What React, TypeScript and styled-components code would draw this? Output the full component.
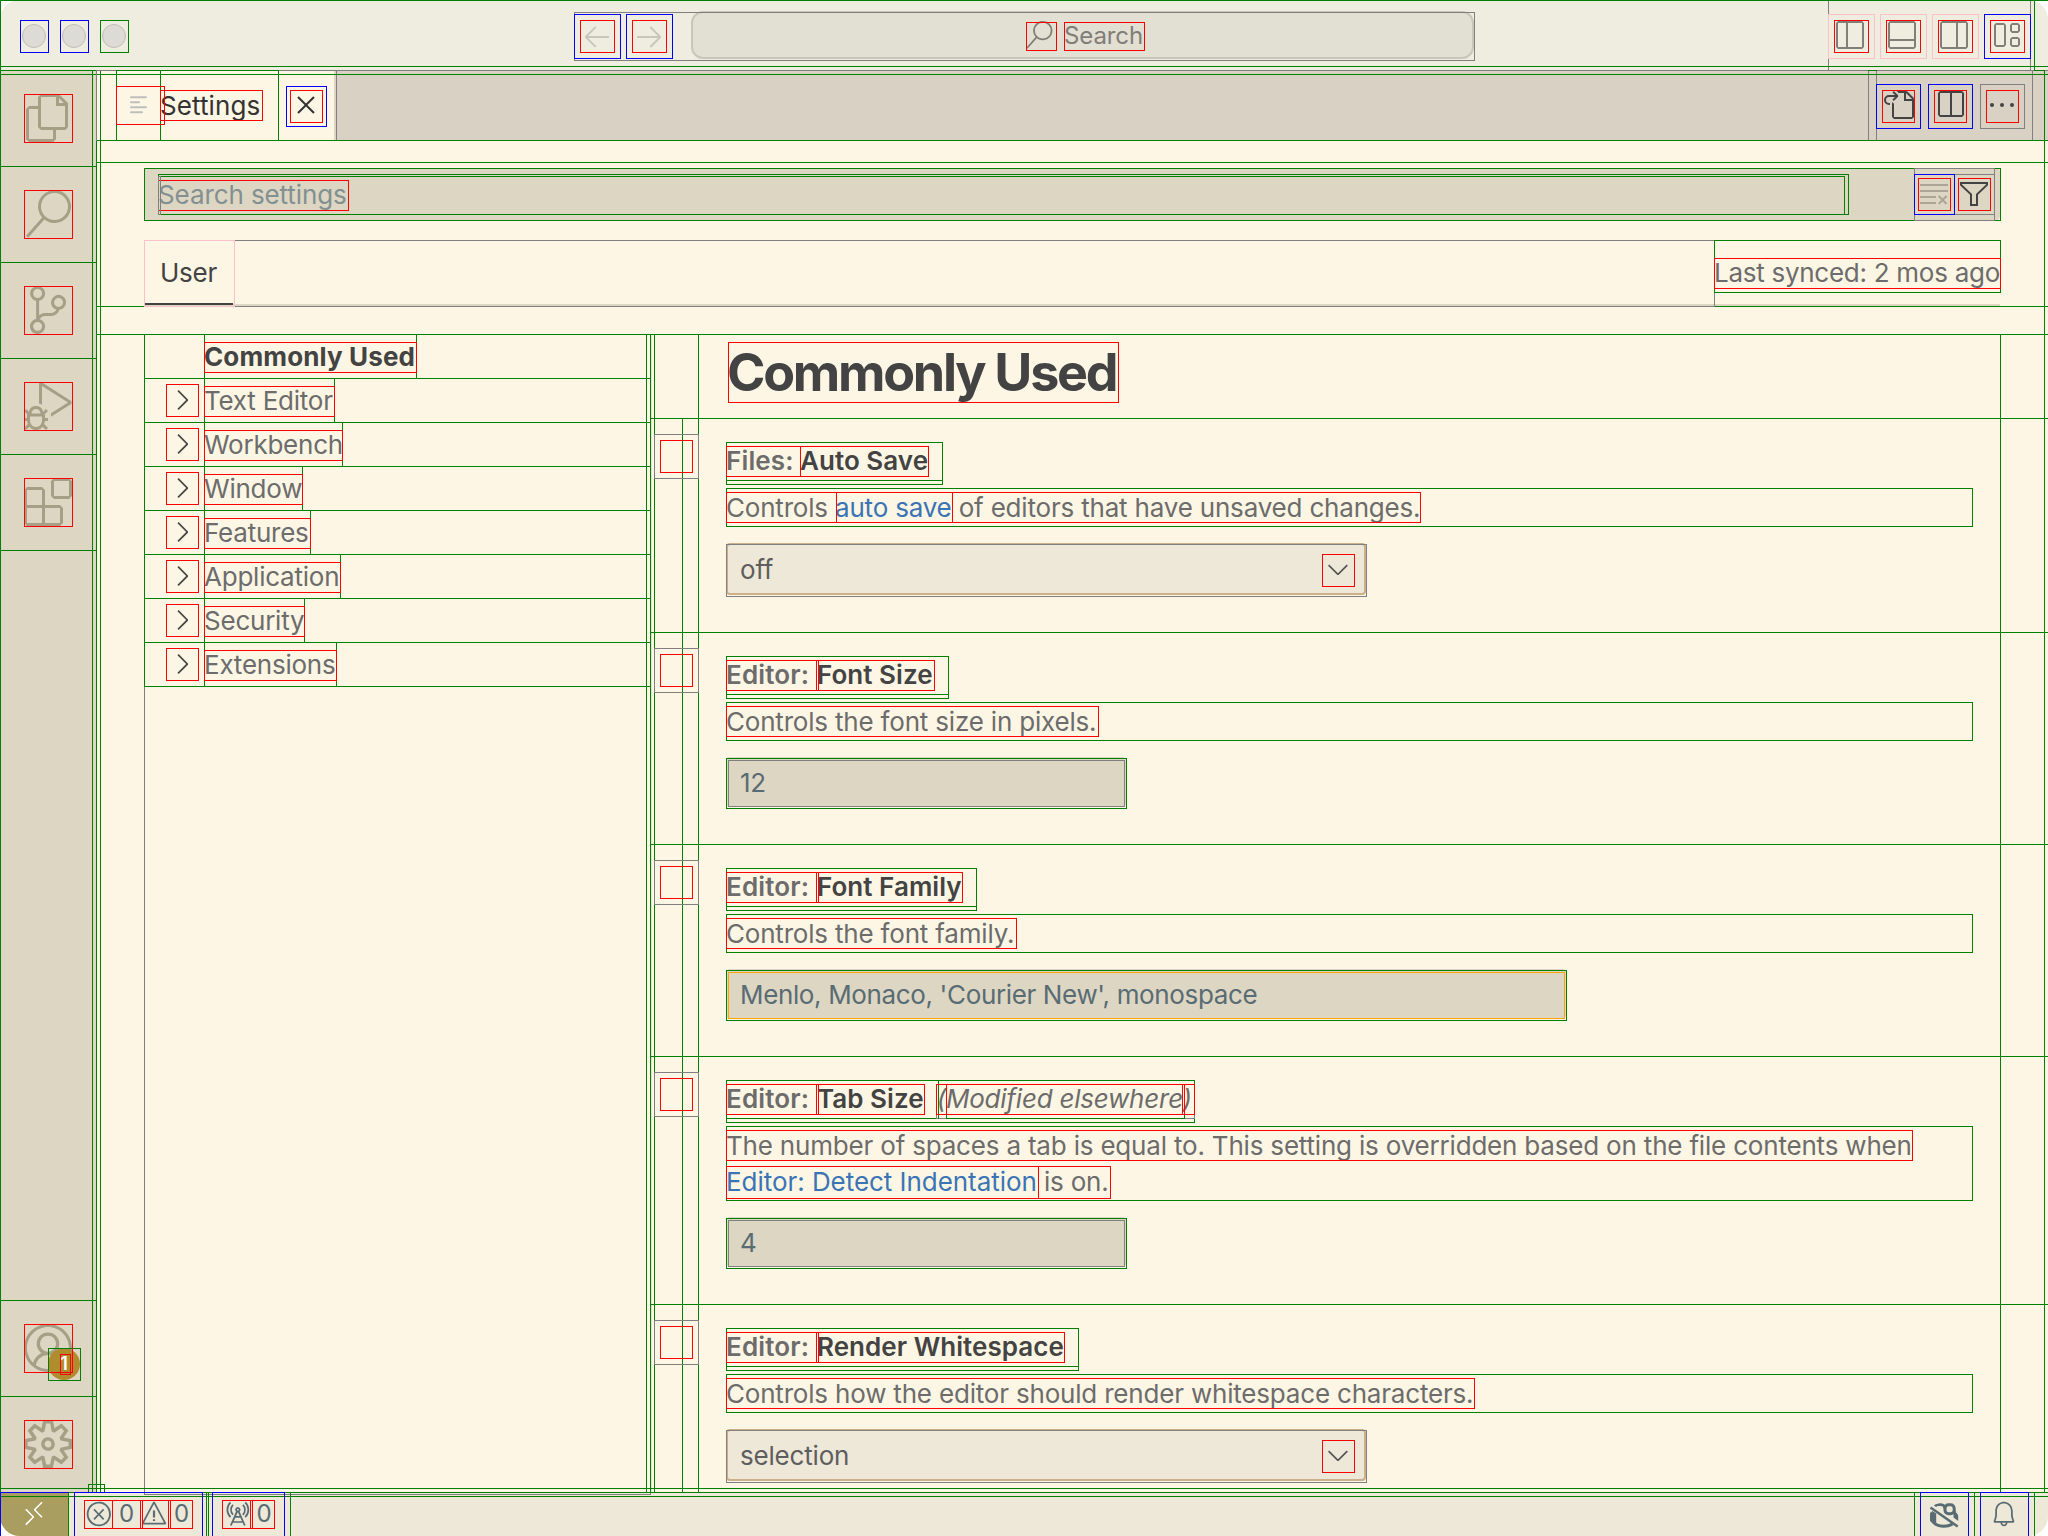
import React from 'react';
import styled, { createGlobalStyle } from 'styled-components';
import {
  VscFiles, VscSearch, VscSourceControl, VscDebugAlt, VscExtensions, VscAccount, VscSettingsGear,
  VscLayoutSidebarLeftOff, VscLayoutPanelOff, VscLayoutSidebarRightOff, VscLayout,
  VscGoToFile, VscSplitHorizontal, VscEllipsis, VscClearAll, VscFilter,
  VscChevronRight, VscChevronDown, VscClose, VscError, VscWarning, VscRadioTower,
  VscBell, VscRemote, VscArrowLeft, VscArrowRight,
} from 'react-icons/vsc';

const c = {
  bg: '#fdf6e4',
  side: '#ddd6c3',
  tabs: '#d9d1c4',
  title: '#efece0',
  status: '#eee8d8',
  text: '#6c6c6c',
  strong: '#434343',
  link: '#3b74b5',
  slate: '#596c73',
  activity: '#a69f86',
};

const Global = createGlobalStyle`
  * { box-sizing: border-box; }
  body { margin: 0; background: #fff; }
  svg { display: block; flex: none; }
`;

const Window = styled.div`
  position: relative;
  display: flex;
  flex-direction: column;
  width: 2048px;
  height: 1536px;
  overflow: hidden;
  border-radius: 20px;
  background: ${c.bg};
  color: ${c.text};
  font: 400 26px/30px Inter, "Liberation Sans", sans-serif;
  letter-spacing: -0.19px;
  white-space: pre;
`;

/* Title bar */
const TitleBar = styled.header`
  display: flex;
  flex: none;
  height: 70px;
  padding: 0 26px 0 22px;
  background: ${c.title};
`;
const Lights = styled.div`
  display: flex;
  gap: 16px;
  width: 559px;
  padding-top: 24px;
`;
const Light = styled.span`
  width: 24px;
  height: 24px;
  border: 1px solid #bfbdb6;
  border-radius: 50%;
  background: #dddbd6;
`;
const History = styled.div`
  display: flex;
  gap: 20px;
  width: 110px;
  padding-top: 20px;
  color: #c9c6bb;
  font-size: 32px;
`;
const CommandCenter = styled.div`
  display: flex;
  align-items: center;
  justify-content: center;
  gap: 11px;
  width: 783px;
  height: 48px;
  margin-top: 11px;
  padding-left: 3px;
  border: 2px solid #c9c6ba;
  border-radius: 12px;
  background: #e2dfd3;
  color: #807e77;
  font-size: 24px;
  letter-spacing: -0.1px;
`;
const LayoutActions = styled.div`
  display: flex;
  gap: 20px;
  margin-left: auto;
  padding-top: 19px;
  color: #827f78;
  font-size: 32px;
`;

/* Activity bar */
const Body = styled.div`
  display: flex;
  flex: 1;
  min-height: 0;
`;
const ActivityBar = styled.nav`
  display: flex;
  flex-direction: column;
  flex: none;
  width: 96px;
  background: ${c.side};
  color: ${c.activity};
  font-size: 48px;
`;
const ActivityItem = styled.div`
  position: relative;
  display: flex;
  align-items: center;
  justify-content: center;
  height: 96px;
`;
const Spacer = styled.div`
  flex: 1;
`;
const Badge = styled.span`
  position: absolute;
  left: 48px;
  top: 48px;
  width: 32px;
  height: 32px;
  border-radius: 50%;
  background: #b08c2e;
  color: #fff;
  font-size: 18px;
  font-weight: 600;
  line-height: 32px;
  text-align: center;
`;

/* Editor */
const Editor = styled.main`
  display: flex;
  flex-direction: column;
  flex: 1;
  min-width: 0;
`;
const TabBar = styled.div`
  display: flex;
  flex: none;
  height: 70px;
  background: ${c.tabs};
`;
const Tab = styled.div`
  display: flex;
  align-items: center;
  width: 240px;
  padding-left: 34px;
  border-right: 2px solid ${c.side};
  background: ${c.bg};
  color: #333;
  letter-spacing: 0.1px;
`;
const TabLabel = styled.span`
  width: 143px;
  padding: 1px 0 0 13px;
`;
const EditorActions = styled.div`
  display: flex;
  align-items: center;
  gap: 20px;
  margin-left: auto;
  padding-right: 30px;
  color: ${c.strong};
  font-size: 32px;
`;
const Header = styled.div`
  display: flex;
  flex-direction: column;
  flex: none;
  gap: 20px;
  height: 194px;
  padding: 28px 48px 0;
`;
const SearchBox = styled.div`
  display: flex;
  align-items: center;
  gap: 8px;
  height: 52px;
  padding: 0 10px 0 14px;
  border-radius: 4px;
  background: ${c.side};
  color: #829092;
  letter-spacing: -0.1px;
`;
const Grow = styled.span`
  flex: 1;
  padding-top: 2px;
`;
const Glyph = styled.span<{ $color: string }>`
  color: ${p => p.$color};
  font-size: 32px;
`;
const ScopeRow = styled.div`
  display: flex;
  justify-content: space-between;
  height: 66px;
  padding-left: 1px;
  border-bottom: 2px solid ${c.side};
  line-height: 66px;
  letter-spacing: -0.27px;
`;
const Scope = styled.span`
  width: 88px;
  height: 65px;
  padding-left: 15px;
  border-bottom: 2px solid ${c.strong};
  color: ${c.strong};
`;
const Split = styled.div`
  display: flex;
  flex: 1;
  min-height: 0;
  padding-left: 48px;
`;
const Toc = styled.div`
  width: 508px;
  border-right: 2px solid #e8e1cf;
`;
const TocRow = styled.div<{ $selected?: boolean }>`
  display: flex;
  align-items: center;
  gap: 6px;
  height: 44px;
  padding-left: ${p => (p.$selected ? 60 : 22)}px;
  color: ${p => (p.$selected ? c.strong : c.text)};
  font-weight: ${p => (p.$selected ? 700 : 400)};
  letter-spacing: ${p => (p.$selected ? 0.13 : -0.23)}px;
`;
const TocLabel = styled.span`
  padding-top: 1px;
  line-height: 31px;
`;
const List = styled.div`
  flex: 1;
  min-width: 0;
  overflow: hidden;
  padding-left: 74px;
`;
const Heading = styled.h2`
  height: 84px;
  margin: 0;
  padding: 9px 0 0 1px;
  color: ${c.strong};
  font-size: 52px;
  font-weight: 700;
  line-height: 60px;
  letter-spacing: -2.27px;
`;
const Setting = styled.section<{ $h: number }>`
  height: ${p => p.$h}px;
  padding-top: 28px;
`;
const Title = styled.div`
  display: flex;
  height: 42px;
  font-weight: 600;
`;
const Category = styled.span<{ $w: number }>`
  width: ${p => p.$w}px;
  letter-spacing: 0.15px;
`;
const Name = styled.span`
  color: ${c.strong};
  letter-spacing: 0.04px;
`;
const Modified = styled.span`
  padding-left: 13px;
  font-style: italic;
  font-weight: 400;
  letter-spacing: -0.22px;
`;
const Description = styled.div`
  padding-top: 2px;
  line-height: 36px;
`;
const Link = styled.a<{ $ls?: number }>`
  color: ${c.link};
  letter-spacing: ${p => p.$ls ?? -0.2}px;
`;
const Select = styled.div`
  display: flex;
  align-items: center;
  justify-content: space-between;
  width: 640px;
  height: 52px;
  margin-top: 17px;
  padding: 0 10px 0 12px;
  border: 2px solid #ccb08c;
  border-radius: 4px;
  background: ${c.status};
  color: #5e5e5e;
`;
const SelectValue = styled.span`
  padding-top: 2px;
`;
const Input = styled.div<{ $w: number }>`
  width: ${p => p.$w}px;
  height: 50px;
  margin-top: 17px;
  padding: 1px 0 0 14px;
  border-radius: 4px;
  background: ${c.side};
  color: ${c.slate};
  line-height: 50px;
  letter-spacing: -0.36px;
`;

/* Status bar */
const StatusBar = styled.footer`
  display: flex;
  flex: none;
  height: 44px;
  background: ${c.status};
  color: ${c.slate};
  font-size: 24px;
`;
const Remote = styled.div`
  display: flex;
  align-items: center;
  justify-content: center;
  width: 68px;
  background: #a99e5f;
  color: #fff;
  font-size: 28px;
`;
const StatusItem = styled.div<{ $ml: number; $w: number }>`
  display: flex;
  align-items: center;
  justify-content: center;
  gap: 6px;
  width: ${p => p.$w}px;
  margin-left: ${p => p.$ml}px;
`;
const StatusGlyph = styled.span`
  font-size: 28px;
`;

/* Element outlines drawn above the window */
type Tone = 'green' | 'gray' | 'blue' | 'pink' | 'orange' | 'red';
type Rect = [Tone, number, number, number, number];
const Outlines = styled.div`
  position: absolute;
  inset: 0;
  width: 2048px;
  height: 1536px;
  overflow: hidden;
  pointer-events: none;
`;
const Outline = styled.i<{ $tone: Tone }>`
  position: absolute;
  border: 1px solid ${p => p.$tone};
`;

const G = 'green' as const, Y = 'gray' as const, B = 'blue' as const, P = 'pink' as const, O = 'orange' as const, R = 'red' as const;
const toc: [string, number][] = [
  ['Commonly Used', 416], ['Text Editor', 334], ['Workbench', 342], ['Window', 302],
  ['Features', 310], ['Application', 340], ['Security', 304], ['Extensions', 336],
];

const frame: Rect[] = [
  [Y, 1828, 0, 2030, 70], [Y, 574, 12, 1474, 60],
  [Y, 96, 70, 336, 140], [Y, 1868, 70, 2048, 140], [Y, 1876, 70, 2032, 140],
  [Y, 144, 334, 650, 1494],
  [G, 0, 0, 2050, 1540], [G, 2034, 0, 2034, 70], [G, 0, 66, 2050, 74],
  [G, 0, 70, 96, 166], [G, 92, 70, 100, 1492], [G, 0, 166, 96, 262], [G, 0, 262, 96, 358],
  [G, 0, 358, 96, 454], [G, 0, 454, 96, 550], [G, 96, 140, 96, 1492],
  [G, 0, 1300, 96, 1396], [G, 0, 1488, 2050, 1496], [G, 88, 1484, 104, 1492], [G, 0, 1492, 2050, 1492],
  [Y, 96, 70, 2034, 70],
  [G, 116, 70, 160, 140], [G, 160, 70, 278, 140], [G, 96, 140, 2050, 140], [Y, 96, 70, 96, 140],
  [G, 2034, 70, 2044, 70], [G, 1868, 70, 1876, 70], [G, 2044, 70, 2044, 1492],
  [G, 96, 162, 2050, 162], [G, 96, 306, 2050, 306], [G, 96, 334, 2050, 334],
  [G, 144, 168, 2000, 220], [G, 158, 174, 1848, 214], [G, 158, 176, 1844, 214], [Y, 158, 176, 160, 214],
  [Y, 1914, 168, 1994, 220], [Y, 1954, 174, 1994, 214], [B, 1914, 174, 1954, 214],
  [Y, 234, 240, 1714, 306], [P, 144, 240, 234, 306], [G, 1714, 240, 2000, 292],
  [G, 646, 334, 654, 1492], [G, 650, 334, 650, 1492], [G, 698, 334, 698, 1492], [G, 682, 418, 682, 1492],
  [G, 2000, 334, 2000, 1492],
  [B, 20, 20, 48, 52], [B, 60, 20, 88, 52], [G, 100, 20, 128, 52],
  [B, 574, 14, 620, 58], [B, 626, 14, 672, 58],
  [P, 1828, 14, 1874, 58], [P, 1880, 14, 1926, 58], [P, 1932, 14, 1978, 58], [B, 1984, 14, 2030, 58],
  [B, 286, 86, 326, 126], [B, 1876, 84, 1920, 128], [B, 1928, 84, 1972, 128], [Y, 1980, 84, 2024, 128],
  [G, 68, 1492, 206, 1540], [G, 208, 1492, 290, 1540], [G, 1914, 1492, 1974, 1540], [G, 1974, 1492, 2034, 1540],
  [B, 0, 1492, 68, 1492], [B, 0, 1492, 0, 1540], [B, 74, 1492, 202, 1540], [B, 212, 1492, 284, 1540],
  [B, 1920, 1492, 1968, 1540], [B, 1980, 1492, 2028, 1540],
  [G, 48, 1348, 80, 1380],
];
const glyphs: Rect[] = [
  [R, 580, 20, 614, 52], [R, 632, 20, 666, 52], [R, 1026, 22, 1056, 50], [R, 1064, 22, 1144, 50],
  [R, 1834, 20, 1868, 52], [R, 1886, 20, 1920, 52], [R, 1938, 20, 1972, 52], [R, 1990, 20, 2024, 52],
  [R, 24, 94, 72, 142], [R, 24, 190, 72, 238], [R, 24, 286, 72, 334], [R, 24, 382, 72, 430], [R, 24, 478, 72, 526],
  [R, 24, 1324, 72, 1372], [R, 24, 1420, 72, 1468], [R, 60, 1354, 70, 1374],
  [R, 116, 86, 164, 124], [R, 160, 90, 262, 120], [R, 290, 90, 322, 122],
  [R, 1882, 90, 1914, 122], [R, 1934, 90, 1966, 122], [R, 1986, 90, 2018, 122],
  [R, 158, 180, 348, 210], [Y, 158, 176, 160, 214], [R, 1918, 178, 1950, 210], [R, 1958, 178, 1990, 210],
  [R, 1714, 258, 2000, 288], [R, 728, 342, 1118, 402],
  [R, 84, 1500, 112, 1528], [R, 112, 1500, 142, 1528], [R, 140, 1500, 170, 1528], [R, 168, 1500, 192, 1528],
  [R, 222, 1500, 252, 1528], [R, 250, 1500, 274, 1528],
];
const tocRects: Rect[] = toc.flatMap(([, right], i): Rect[] => {
  const y = 334 + i * 44;
  const rows: Rect[] = [[G, 144, y, 650, y + 44], [G, 204, y, right, y + 44], [R, 204, y + 8, right, y + 38]];
  return i ? [...rows, [R, 166, y + 6, 198, y + 38]] : rows;
});
const select = (y: number): Rect[] => [[Y, 726, y, 1366, y + 52], [R, 1322, y + 10, 1354, y + 42]];
const input = (y: number, right: number, tone: Tone): Rect[] => [[G, 726, y, right, y + 50], [tone, 728, y + 2, right - 2, y + 48]];
const row = (y: number, titleRight: number, nameRight: number, cat: [number, number], descH: number): Rect[] => [
  [G, 650, y, 2050, y],
  [Y, 654, y + 16, 698, y + 60], [R, 660, y + 22, 692, y + 54],
  [G, 726, y + 24, titleRight, y + 66], [G, 726, y + 24, titleRight, y + 62],
  [R, 726, y + 28, cat[1], y + 58], [R, cat[0], y + 28, nameRight, y + 58],
  [G, 726, y + 70, 1972, y + 70 + descH],
];
const settingRects: Rect[] = [
  ...row(418, 942, 928, [800, 800], 38), [R, 726, 492, 836, 522], [R, 836, 492, 952, 522], [R, 952, 492, 1420, 522], ...select(544),
  ...row(632, 948, 934, [816, 818], 38), [R, 726, 706, 1098, 736], ...input(758, 1126, Y),
  ...row(844, 976, 962, [816, 818], 38), [R, 726, 918, 1016, 948], ...input(970, 1566, O),
  ...row(1056, 1194, 924, [816, 818], 74),
  [Y, 936, 1084, 1194, 1118], [G, 938, 1080, 938, 1118], [G, 946, 1084, 1184, 1118],
  [R, 936, 1084, 946, 1114], [R, 946, 1084, 1184, 1114], [R, 1182, 1084, 1194, 1114],
  [R, 726, 1130, 1912, 1160], [R, 726, 1166, 1038, 1198], [R, 1038, 1166, 1110, 1198], ...input(1218, 1126, Y),
  ...row(1304, 1078, 1064, [816, 818], 38), [R, 726, 1378, 1474, 1408], ...select(1430),
];
const outlines = [...frame, ...tocRects, ...settingRects, ...glyphs];

function PageIcon() {
  return (
    <svg width="17" height="18" viewBox="0 0 17 18" stroke="#bdbfbd" strokeWidth="2" strokeLinecap="round">
      <path d="M1 1.2h15M1 6.2h8M1 11.2h15M1 16.2h11" />
    </svg>
  );
}

function CopilotOff() {
  return (
    <svg width="32" height="28" viewBox="0 0 32 28" fill="none" stroke="currentColor" strokeWidth="2.6">
      <path d="M7 6.200C8 4.600 13 4 15.600 5.400L17 8.500" />
      <rect x="17" y="4.800" width="9.200" height="9" rx="3.600" strokeWidth="3" />
      <path d="M3.600 12.500v7.500c2.500 4 7.500 6.300 12.400 6.300 3.400 0 6-.8 8.500-2.100" strokeWidth="3" />
      <path d="M2.200 14.500l2-3.500 4 2.500v9.500l-2 1.500-4-3.500z" fill="currentColor" stroke="none" />
      <path d="M25.500 13l2-3 .5 2.500c1.600 1.200 2.200 2.500 2.200 4v4.500l-4.700-3.500z" fill="currentColor" stroke="none" />
      <path d="M2.500 7.600L29.700 26.600" strokeWidth="2.400" />
    </svg>
  );
}

function Item({ h, category, name, extra, children }: { h: number; category: string; name: string; extra?: string; children: React.ReactNode }) {
  return (
    <Setting $h={h}>
      <Title>
        <Category $w={category === 'Files: ' ? 74 : 91}>{category}</Category>
        <Name>{name}</Name>
        {extra && <Modified>{extra}</Modified>}
      </Title>
      {children}
    </Setting>
  );
}

function Dropdown({ value }: { value: string }) {
  return (
    <Select>
      <SelectValue>{value}</SelectValue>
      <Glyph $color="#555"><VscChevronDown /></Glyph>
    </Select>
  );
}

export default function App() {
  return (
    <>
      <Global />
      <Window>
        <TitleBar>
          <Lights><Light /><Light /><Light /></Lights>
          <History><VscArrowLeft /><VscArrowRight /></History>
          <CommandCenter><VscSearch size={28} /><SelectValue>Search</SelectValue></CommandCenter>
          <LayoutActions>
            <VscLayoutSidebarLeftOff /><VscLayoutPanelOff /><VscLayoutSidebarRightOff /><VscLayout />
          </LayoutActions>
        </TitleBar>
        <Body>
          <ActivityBar>
            <ActivityItem><VscFiles /></ActivityItem>
            <ActivityItem><VscSearch /></ActivityItem>
            <ActivityItem><VscSourceControl /></ActivityItem>
            <ActivityItem><VscDebugAlt /></ActivityItem>
            <ActivityItem><VscExtensions /></ActivityItem>
            <Spacer />
            <ActivityItem><VscAccount /><Badge>1</Badge></ActivityItem>
            <ActivityItem><VscSettingsGear /></ActivityItem>
          </ActivityBar>
          <Editor>
            <TabBar>
              <Tab><PageIcon /><TabLabel>Settings</TabLabel><VscClose size={32} /></Tab>
              <EditorActions><VscGoToFile /><VscSplitHorizontal /><VscEllipsis /></EditorActions>
            </TabBar>
            <Header>
              <SearchBox>
                <Grow>Search settings</Grow>
                <Glyph $color="#aaa595"><VscClearAll /></Glyph>
                <Glyph $color={c.strong}><VscFilter /></Glyph>
              </SearchBox>
              <ScopeRow><Scope>User</Scope><span>Last synced: 2 mos ago</span></ScopeRow>
            </Header>
            <Split>
              <Toc>
                {toc.map(([label], i) => (
                  <TocRow key={label} $selected={i === 0}>
                    {i > 0 && <Glyph $color="#484848"><VscChevronRight /></Glyph>}
                    <TocLabel>{label}</TocLabel>
                  </TocRow>
                ))}
              </Toc>
              <List>
                <Heading>Commonly Used</Heading>
                <Item h={214} category="Files: " name="Auto Save">
                  <Description>Controls <Link>auto save</Link> of editors that have unsaved changes.</Description>
                  <Dropdown value="off" />
                </Item>
                <Item h={212} category="Editor: " name="Font Size">
                  <Description>Controls the font size in pixels.</Description>
                  <Input $w={400}>12</Input>
                </Item>
                <Item h={212} category="Editor: " name="Font Family">
                  <Description>Controls the font family.</Description>
                  <Input $w={840}>Menlo, Monaco, 'Courier New', monospace</Input>
                </Item>
                <Item h={248} category="Editor: " name="Tab Size" extra="(Modified elsewhere)">
                  <Description>
                    {'The number of spaces a tab is equal to. This setting is overridden based on the file contents when\n'}
                    <Link $ls={-0.05}>Editor: Detect Indentation</Link> is on.
                  </Description>
                  <Input $w={400}>4</Input>
                </Item>
                <Item h={232} category="Editor: " name="Render Whitespace">
                  <Description>Controls how the editor should render whitespace characters.</Description>
                  <Dropdown value="selection" />
                </Item>
              </List>
            </Split>
          </Editor>
        </Body>
        <StatusBar>
          <Remote><VscRemote /></Remote>
          <StatusItem $ml={5} $w={128}>
            <StatusGlyph><VscError /></StatusGlyph>0
            <StatusGlyph><VscWarning /></StatusGlyph>0
          </StatusItem>
          <StatusItem $ml={10} $w={72}><StatusGlyph><VscRadioTower /></StatusGlyph>0</StatusItem>
          <StatusItem $ml={1637} $w={48}><CopilotOff /></StatusItem>
          <StatusItem $ml={12} $w={48}><VscBell size={28} /></StatusItem>
        </StatusBar>
      </Window>
      <Outlines>
        {outlines.map(([tone, x1, y1, x2, y2], i) => (
          <Outline
            key={i}
            $tone={tone}
            style={{
              left: x1,
              top: y1,
              width: x2 - x1 + 1,
              height: y2 - y1 + 1,
              borderWidth: x1 === x2 ? '0 0 0 1px' : y1 === y2 ? '1px 0 0 0' : '1px',
            }}
          />
        ))}
      </Outlines>
    </>
  );
}
